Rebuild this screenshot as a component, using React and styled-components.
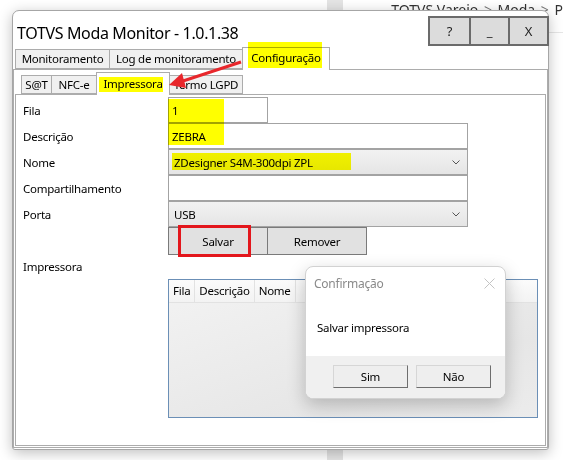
import styled, { createGlobalStyle } from "styled-components";

const GlobalStyle = createGlobalStyle`
  html, body { margin: 0; padding: 0; background: #fff; }
  body {
    font-family: "Noto Sans", "Open Sans", sans-serif;
    font-size: 11.5px;
    letter-spacing: -0.25px;
    overflow: hidden;
  }
  * { box-sizing: border-box; }
`;

export default function App() {
    return (
        <Desktop>
            <GlobalStyle />
            <LeftPane />
            <GreyColumn />
            <RightPane>
                <Breadcrumb>TOTVS Varejo <Sep>&gt;</Sep> Moda <Sep>&gt;</Sep> P</Breadcrumb>
            </RightPane>

            <Window>
                <TitleBar>
                    <Title>TOTVS Moda Monitor - 1.0.1.38</Title>
                    <TitleButtons>
                        <TitleBtn>?</TitleBtn>
                        <TitleBtn>_</TitleBtn>
                        <TitleBtn>X</TitleBtn>
                    </TitleButtons>
                </TitleBar>
                <MainTabs>
                    <Tab $w={95}>Monitoramento</Tab>
                    <Tab $w={134}>Log de monitoramento</Tab>
                    <Tab $w={88} $active>Configuração</Tab>
                </MainTabs>
                <MainPage>
                    <SubTabs>
                        <SubTab $w={31}>S@T</SubTab>
                        <SubTab $w={46}>NFC-e</SubTab>
                        <SubTab $w={74} $active>Impressora</SubTab>
                        <SubTab $w={74}>Termo LGPD</SubTab>
                    </SubTabs>
                    <SubPanel>
                        <Form>
                            <Label>Fila</Label>
                            <Field $w={100}>1</Field>
                            <Label>Descrição</Label>
                            <Field $w={300}>ZEBRA</Field>
                            <Label>Nome</Label>
                            <Field $w={300} $combo>ZDesigner S4M-300dpi ZPL<Chevron /></Field>
                            <Label>Compartilhamento</Label>
                            <Field $w={300}></Field>
                            <Label>Porta</Label>
                            <Field $w={300} $combo>USB<Chevron /></Field>
                            <span />
                            <ButtonRow>
                                <Button>Salvar</Button>
                                <Button>Remover</Button>
                            </ButtonRow>
                            <ListLabel>Impressora</ListLabel>
                            <Grid>
                                <GridHead>
                                    <HeadCell>Fila</HeadCell>
                                    <HeadCell>Descrição</HeadCell>
                                    <HeadCell>Nome</HeadCell>
                                    <HeadFill />
                                </GridHead>
                            </Grid>
                        </Form>
                    </SubPanel>
                </MainPage>
            </Window>

            <Dialog>
                <DialogHead>
                    <DialogTitle>Confirmação</DialogTitle>
                    <svg width="11" height="11" viewBox="0 0 11 11">
                        <path d="M0.5 0.5 L10.5 10.5 M10.5 0.5 L0.5 10.5" stroke="#c4c4c4" strokeWidth="1" />
                    </svg>
                </DialogHead>
                <DialogBody>Salvar impressora</DialogBody>
                <DialogFooter>
                    <DialogButton>Sim</DialogButton>
                    <DialogButton>Não</DialogButton>
                </DialogFooter>
            </Dialog>

            {/* marcações de destaque */}
            <Highlight $x={248} $y={42} $w={74} $h={26} />
            <Highlight $x={99} $y={77} $w={64} $h={15} />
            <Highlight $x={168} $y={99} $w={56} $h={46} />
            <Highlight $x={172} $y={153} $w={179} $h={17} />
            <RedBox />
            <Arrow width="90" height="40" viewBox="160 55 90 40">
                <line x1="241" y1="62" x2="183" y2="81" stroke="#e8262b" strokeWidth="3" />
                <polygon points="169,85 186,88 182,73" fill="#e8262b" />
            </Arrow>
        </Desktop>
    );
}

function Chevron() {
    return (
        <ChevronIcon width="8" height="5" viewBox="0 0 8 5">
            <path d="M0.5 0.5 L4 4 L7.5 0.5" fill="none" stroke="#555" strokeWidth="1" />
        </ChevronIcon>
    );
}

const Desktop = styled.div`
    position: relative;
    width: 563px;
    height: 460px;
    overflow: hidden;
    display: flex;
    background: #fff;
`

const LeftPane = styled.div`
    width: 350px;
`

const GreyColumn = styled.div`
    width: 17px;
    background: #e4e4e4;
`

const RightPane = styled.div`
    flex: 1;
`

const Breadcrumb = styled.div`
    height: 33px;
    padding-left: 48px;
    border-bottom: 1px solid #e6e6e6;
    font-size: 14px;
    letter-spacing: 0;
    line-height: 20px;
    color: #333;
    white-space: nowrap;
`

const Sep = styled.span`
    color: #777;
    margin: 0 2px;
`

const Window = styled.div`
    position: absolute;
    left: 12px;
    top: 10px;
    width: 537px;
    height: 440px;
    background: #fff;
    border: 1px solid #a6a6a6;
    border-radius: 7px 7px 3px 3px;
    box-shadow: 0 3px 14px rgba(0, 0, 0, 0.25);
    display: flex;
    flex-direction: column;
`

const TitleBar = styled.div`
    height: 36px;
    display: flex;
    align-items: flex-start;
    padding-left: 4px;
`

const Title = styled.div`
    margin-top: 12px;
    font-size: 16px;
    letter-spacing: -0.35px;
    line-height: 20px;
    color: #000;
    white-space: nowrap;
`

const TitleButtons = styled.div`
    margin-left: auto;
    margin-top: 5px;
    margin-right: -1px;
    display: flex;
    border: 2px solid #6b6b6b;
    height: 30px;
    background: #dcdcdc;
`

const TitleBtn = styled.div`
    width: 39px;
    display: flex;
    align-items: center;
    justify-content: center;
    font-size: 13px;
    color: #222;

    & + & {
        border-left: 2px solid #6b6b6b;
    }
`

const MainTabs = styled.div`
    height: 22px;
    display: flex;
    align-items: flex-end;
    padding-left: 2px;
    position: relative;
    z-index: 1;
`

const Tab = styled.div`
    width: ${p => p.$w}px;
    height: ${p => (p.$active ? 23 : 20)}px;
    margin-bottom: ${p => (p.$active ? -1 : 0)}px;
    background: ${p => (p.$active ? "#fff" : "#f0f0f0")};
    border: 1px solid #acacac;
    border-bottom: ${p => (p.$active ? "none" : "1px solid #acacac")};
    line-height: 18px;
    padding-top: ${p => (p.$active ? 1 : 0)}px;
    text-align: center;
    white-space: nowrap;

    & + & {
        margin-left: -1px;
    }
`

const MainPage = styled.div`
    flex: 1;
    border: 1px solid #acacac;
    margin: 0 0 1px 0;
    display: flex;
    flex-direction: column;
`

const SubTabs = styled.div`
    height: 24px;
    display: flex;
    align-items: flex-end;
    padding-left: 7px;
    position: relative;
    z-index: 1;
`

const SubTab = styled(Tab)`
    height: ${p => (p.$active ? 23 : 19)}px;
    line-height: ${p => (p.$active ? 19 : 17)}px;
`

const SubPanel = styled.div`
    flex: 1;
    margin: 0 1px 1px 1px;
    border: 1px solid #acacac;
`

const Form = styled.div`
    display: grid;
    grid-template-columns: 145px 1fr;
    grid-auto-rows: 26px;
    padding: 2px 0 0 7px;
`

const Label = styled.div`
    display: flex;
    align-items: center;
    color: #000;
`

const Field = styled.div`
    position: relative;
    width: ${p => p.$w}px;
    height: 26px;
    border: 1px solid #a3a3a3;
    background: ${p => (p.$combo ? "linear-gradient(#f2f2f2, #e5e5e5)" : "#fff")};
    padding-left: ${p => (p.$combo ? 5 : 3)}px;
    display: flex;
    align-items: center;
    white-space: nowrap;
`

const ChevronIcon = styled.svg`
    position: absolute;
    right: 7px;
    top: 10px;
`

const ButtonRow = styled.div`
    display: flex;
    height: 28px;
`

const Button = styled.div`
    width: 100px;
    height: 28px;
    background: #e1e1e1;
    border: 1px solid #7a7a7a;
    display: flex;
    align-items: center;
    justify-content: center;

    & + & {
        margin-left: -1px;
    }
`

const ListLabel = styled(Label)`
    align-items: flex-start;
    margin-top: 6px;
`

const Grid = styled.div`
    width: 370px;
    height: 139px;
    margin-top: 26px;
    border: 1px solid #6b8fb6;
    background: linear-gradient(160deg, #f3f3f3, #e6e6e6 70%, #ececec);
`

const GridHead = styled.div`
    display: flex;
    height: 23px;
    background: linear-gradient(#fbfbfb, #f3f3f3);
    border-bottom: 1px solid #e2e2e2;
`

const HeadCell = styled.div`
    padding: 0 4px;
    border-right: 1px solid #e2e2e2;
    line-height: 22px;
    white-space: nowrap;
`

const HeadFill = styled.div`
    flex: 1;
`

const Dialog = styled.div`
    position: absolute;
    left: 305px;
    top: 266px;
    width: 201px;
    height: 133px;
    border: 1px solid #d2d2d2;
    border-radius: 8px;
    background: #fff;
    box-shadow: 0 6px 18px rgba(0, 0, 0, 0.22);
    display: flex;
    flex-direction: column;
    overflow: hidden;
    z-index: 2;
`

const DialogHead = styled.div`
    height: 32px;
    display: flex;
    align-items: center;
    justify-content: space-between;
    padding: 0 10px 0 8px;
`

const DialogTitle = styled.div`
    font-size: 12px;
    color: #8a8a8a;
`

const DialogBody = styled.div`
    flex: 1;
    padding-left: 11px;
    display: flex;
    align-items: center;
    color: #000;
`

const DialogFooter = styled.div`
    height: 42px;
    background: #f0f0f0;
    display: flex;
    justify-content: flex-end;
    gap: 8px;
    padding: 9px 14px 0 0;
`

const DialogButton = styled.div`
    width: 75px;
    height: 23px;
    background: #eeeeee;
    border: 1px solid;
    border-color: #d6d6d6 #6e6e6e #6e6e6e #d6d6d6;
    display: flex;
    align-items: center;
    justify-content: center;
`

const Highlight = styled.div`
    position: absolute;
    left: ${p => p.$x}px;
    top: ${p => p.$y}px;
    width: ${p => p.$w}px;
    height: ${p => p.$h}px;
    background: #ffff00;
    mix-blend-mode: multiply;
    z-index: 3;
`

const RedBox = styled.div`
    position: absolute;
    left: 178px;
    top: 225px;
    width: 73px;
    height: 32px;
    border: 3px solid #e3161c;
    z-index: 3;
`

const Arrow = styled.svg`
    position: absolute;
    left: 160px;
    top: 55px;
    z-index: 4;
`
